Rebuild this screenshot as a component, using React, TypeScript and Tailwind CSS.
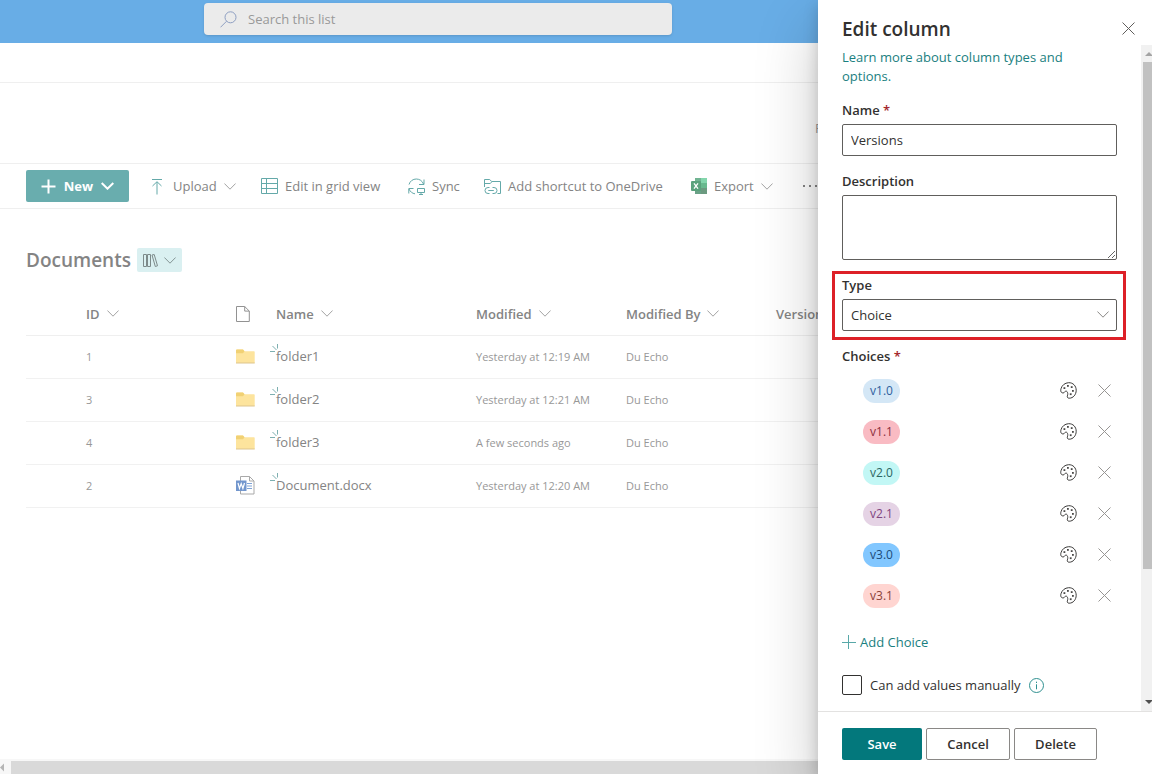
import type { ReactNode } from "react";

const rows = [
  { id: 1, name: "folder1", modified: "Yesterday at 12:19 AM", folder: true },
  { id: 3, name: "folder2", modified: "Yesterday at 12:21 AM", folder: true },
  { id: 4, name: "folder3", modified: "A few seconds ago", folder: true },
  { id: 2, name: "Document.docx", modified: "Yesterday at 12:20 AM", folder: false },
];

const choices = [
  { label: "v1.0", color: "bg-[#d4e7f6] text-[#2f5f9e]" },
  { label: "v1.1", color: "bg-[#f9bbc3] text-[#8c2f3d]" },
  { label: "v2.0", color: "bg-[#c2f7f5] text-[#2b6663]" },
  { label: "v2.1", color: "bg-[#e5d3e5] text-[#7f4580]" },
  { label: "v3.0", color: "bg-[#82c7ff] text-[#1c4a78]" },
  { label: "v3.1", color: "bg-[#ffd5d1] text-[#8b4239]" },
];

const Chevron = ({ className = "" }: { className?: string }) => (
  <svg
    viewBox="0 0 12 7"
    className={`w-3 h-[7px] shrink-0 ${className}`}
    fill="none"
    stroke="currentColor"
    aria-hidden="true"
  >
    <path d="M.4.5 6 6.2 11.6.5" />
  </svg>
);

const Cross = () => (
  <svg viewBox="0 0 13 13" className="w-[13px] h-[13px]" fill="none" stroke="currentColor" aria-hidden="true">
    <path d="M.5.5l12 12M12.5.5l-12 12" />
  </svg>
);

const PaletteIcon = () => (
  <svg viewBox="0 0 17 17" className="w-[17px] h-[17px]" aria-hidden="true">
    <path
      d="M8.600.7C13 .5 16.200 3.900 16.200 8.300c0 4.300-3 7.900-7 7.900-1.700 0-2.200-1.100-1.800-2.300.5-1.600.6-3-.3-4.200-.7-.9-1.800-.8-2.300.1-.7 1.300-2.400 1.600-3.500.4C.6 9.400.6 8.200 1 6.700 2 3.200 4.900.9 8.600.7z"
      fill="none"
      stroke="#3b3a39"
    />
    <g fill="#4a4948">
      <rect x="7" y="3" width="1.800" height="1.800" />
      <rect x="3.500" y="5.200" width="1.800" height="1.800" />
      <rect x="10.800" y="4.200" width="1.800" height="1.800" />
      <rect x="12" y="8" width="1.800" height="1.800" />
      <rect x="9.800" y="11.300" width="1.800" height="1.800" />
    </g>
  </svg>
);

const UploadIcon = () => (
  <svg viewBox="0 0 17 17" className="w-[17px] h-[17px]" fill="none" stroke="#64a9a9" aria-hidden="true">
    <path d="M3 1.500h10M8 16.500V4M3.500 8 8 3.700 12.500 8" />
  </svg>
);

const GridIcon = () => (
  <svg viewBox="0 0 17 17" className="w-[17px] h-[17px]" fill="none" stroke="#64a9a9" aria-hidden="true">
    <path d="M.5.5h16v15H.5zM5.500.5v15M.5 5.500h16M.5 10.500h16" />
  </svg>
);

const SyncIcon = () => (
  <svg viewBox="0 0 17 17" className="w-[17px] h-[17px]" fill="none" stroke="#64a9a9" aria-hidden="true">
    <path d="M1 6.500C2 3 5 1 8.300 1c3.300 0 6 1.900 7.200 5M16 1.500v5h-5M5.500 10.500H.8v5M1 11c1.200 2.700 3.300 4.500 6 4.800M9.500 10.500h7v4h-7zM11 16.500h4M13 14.500v2" />
  </svg>
);

const ShortcutIcon = () => (
  <svg viewBox="0 0 17 17" className="w-[17px] h-[17px]" fill="none" stroke="#64a9a9" aria-hidden="true">
    <path d="M.5 9V1.500h5.200l2 2h8.800v12h-3M.5 5.500h5.800L8 3.500" />
    <path d="M5.500 9.500H4a3 3 0 0 0 0 6h1.500M8.500 9.500H10a3 3 0 0 1 0 6H8.500M4.300 12.500h5.500" />
  </svg>
);

const ExcelIcon = () => (
  <svg viewBox="0 0 16 16" className="w-4 h-4" aria-hidden="true">
    <path d="M4 0h6v8H4z" fill="#71b492" />
    <path d="M10 0h6v5h-6z" fill="#83d6ac" />
    <path d="M10 5h6v5h-6z" fill="#68b98e" />
    <path d="M4 8h6v8H4z" fill="#6aa287" />
    <path d="M10 10h6v6h-6z" fill="#6c9a80" />
    <rect y="3" width="10" height="10" rx="1" fill="#5aa27c" />
    <path d="M3 5.300 7 10.700M7 5.300 3 10.700" stroke="#fff" strokeWidth="1.300" />
  </svg>
);

const FolderIcon = () => (
  <svg viewBox="0 0 19 15" className="w-[19px] h-[15px]" aria-hidden="true">
    <path d="M0 1.500Q0 .5 1 .5h6l1.500 1.700H18q.7 0 .7.800V14H0z" fill="#fde49d" />
    <path d="M0 1.500Q0 .5 1 .5h6l1.500 1.700L7 4.300H0z" fill="#f1d174" />
    <path d="M0 13.500h18.700v1H0z" fill="#dcc58d" />
  </svg>
);

const WordIcon = () => (
  <svg viewBox="0 0 19 19" className="w-[19px] h-[19px]" aria-hidden="true">
    <path d="M4.500.5h9l4.500 4.500v13H4.500zM13.500.5V5H18" fill="#fff" stroke="#a9a9a9" />
    <path d="M11 7.500h5M11 10h5M11 12.500h5" stroke="#7fa3d6" />
    <rect y="4.500" width="10.500" height="10.500" fill="#7296cd" />
    <path d="M2 7l1.500 5.500L5.200 7.500l1.700 5L8.500 7" fill="none" stroke="#fff" strokeWidth="1.200" />
  </svg>
);

const FileIcon = () => (
  <svg viewBox="0 0 14 16" className="w-[14px] h-4" fill="none" stroke="#929292" aria-hidden="true">
    <path d="M.5.5h8.200l4.600 4.600v10.400H.5zM8.700.5v4.600h4.600" />
  </svg>
);

const LibraryIcon = () => (
  <svg viewBox="0 0 15 13" className="w-[15px] h-[13px]" fill="none" stroke="#7d8a8a" aria-hidden="true">
    <path d="M.5.5h3v12h-3zM4.500.5h3v12h-3zM9 1l2.200-.5 3.300 11.300-2.200.7z" />
  </svg>
);

const NewMark = () => (
  <svg
    viewBox="0 0 9 9"
    className="absolute -left-[6px] -top-[3px] w-[9px] h-[9px]"
    fill="none"
    stroke="#7dafb0"
    aria-hidden="true"
  >
    <path d="M7.500 0v4.500M2.500 2l4 4M0 7.500h5" />
  </svg>
);

const ToolButton = ({ icon, label, chevron = false }: { icon: ReactNode; label: string; chevron?: boolean }) => (
  <button type="button" className="flex items-center gap-[7px] whitespace-nowrap">
    {icon}
    <span>{label}</span>
    {chevron && <Chevron className="text-[#a3a3a3]" />}
  </button>
);

const HeaderCell = ({ label }: { label: string }) => (
  <th className="p-0 text-left font-semibold">
    <button type="button" className="flex items-center gap-[7px] whitespace-nowrap">
      {label}
      <Chevron className="text-[#a3a3a3]" />
    </button>
  </th>
);

const Required = () => <span className="text-[#a4262c]"> *</span>;

const DocumentLibrary = () => (
  <main className="flex min-w-0 flex-1 flex-col overflow-hidden">
    <header className="flex h-[43px] shrink-0 bg-[#68ade6] pl-[204px] pt-[3px]">
      <label className="flex h-8 w-[468px] items-center gap-[11px] rounded-sm bg-[#ebebeb] pl-4 shadow-sm">
        <svg viewBox="0 0 17 17" className="w-[17px] h-[17px] shrink-0" fill="none" stroke="#8e9fc2" aria-hidden="true">
          <circle cx="10.500" cy="6.300" r="5.500" />
          <path d="M6.600 10.200.5 16.300" />
        </svg>
        <input
          type="search"
          aria-label="Search this list"
          placeholder="Search this list"
          className="w-full bg-transparent outline-none placeholder:text-[#999]"
        />
      </label>
    </header>
    <div className="h-10 shrink-0 border-b border-[#efefef]" />
    <div className="flex h-[81px] shrink-0 items-center border-b border-[#efefef] pl-[815px] pt-[10px] text-[#999]">
      Follow
    </div>

    <div className="grid h-[45px] shrink-0 grid-cols-[123px_112px_147px_76px_207px_112px_auto] items-center border-b border-[#efefef] pl-[26px] text-[#848484]">
      <button
        type="button"
        className="flex h-8 w-[103px] items-center justify-center gap-2 rounded-xs bg-[#69adae] font-bold text-white"
      >
        <svg viewBox="0 0 15 15" className="w-[15px] h-[15px]" stroke="currentColor" strokeWidth="2" aria-hidden="true">
          <path d="M7.500.5v14M.5 7.500h14" />
        </svg>
        New
        <svg viewBox="0 0 13 8" className="w-[13px] h-2" fill="none" stroke="currentColor" strokeWidth="2" aria-hidden="true">
          <path d="M.7 1l5.800 5.700L12.300 1" />
        </svg>
      </button>
      <ToolButton icon={<UploadIcon />} label="Upload" chevron />
      <ToolButton icon={<GridIcon />} label="Edit in grid view" />
      <ToolButton icon={<SyncIcon />} label="Sync" />
      <ToolButton icon={<ShortcutIcon />} label="Add shortcut to OneDrive" />
      <ToolButton icon={<ExcelIcon />} label="Export" chevron />
      <button type="button" aria-label="More" className="text-[#848484]">
        <svg viewBox="0 0 16 2" className="w-4 h-[2px]" fill="currentColor" aria-hidden="true">
          <path d="M0 0h2v2H0zM6 0h2v2H6zM12 0h2v2h-2z" />
        </svg>
      </button>
    </div>

    <div className="flex flex-1 flex-col overflow-hidden pl-[26px] pt-[39px]">
      <div className="flex h-6 items-center gap-[6px]">
        <h1 className="text-[19px] leading-[26px] font-semibold text-[#848484]">Documents</h1>
        <button
          type="button"
          aria-label="Switch library"
          className="flex h-6 w-[45px] items-center justify-center gap-[6px] rounded-xs bg-[#daf0f1]"
        >
          <LibraryIcon />
          <Chevron className="text-[#849595]" />
        </button>
      </div>

      <table className="mt-[21px] w-[900px] table-fixed border-collapse">
        <colgroup>
          <col className="w-[60px]" />
          <col className="w-[150px]" />
          <col className="w-[40px]" />
          <col className="w-[200px]" />
          <col className="w-[150px]" />
          <col className="w-[150px]" />
          <col className="w-[150px]" />
        </colgroup>
        <thead>
          <tr className="h-[42px] border-b border-[#efefef] text-[#848484]">
            <th className="p-0" />
            <HeaderCell label="ID" />
            <th className="p-0">
              <FileIcon />
            </th>
            <HeaderCell label="Name" />
            <HeaderCell label="Modified" />
            <HeaderCell label="Modified By" />
            <HeaderCell label="Version" />
          </tr>
        </thead>
        <tbody>
          {rows.map((row) => (
            <tr key={row.id} className="h-[43px] border-b border-[#f1f1f1] text-[11px] text-[#989898]">
              <td className="p-0" />
              <td className="p-0">{row.id}</td>
              <td className="p-0">{row.folder ? <FolderIcon /> : <WordIcon />}</td>
              <td className="p-0">
                <a href="#" className="relative text-[13px] leading-5 text-[#848484]">
                  <NewMark />
                  {row.name}
                </a>
              </td>
              <td className="p-0 whitespace-nowrap">{row.modified}</td>
              <td className="p-0">Du Echo</td>
              <td className="p-0" />
            </tr>
          ))}
        </tbody>
      </table>
    </div>

    <div className="flex h-[15px] shrink-0 items-end bg-[#f7f7f7]">
      <svg viewBox="0 0 11 13" className="w-[11px] h-[13px]" aria-hidden="true">
        <path d="M4 2.500v8L0 6.500z" fill="#b5b5b5" />
      </svg>
      <div className="h-[13px] flex-1 bg-[#d9d9d9]" />
    </div>
  </main>
);

const EditColumnPanel = () => (
  <aside className="relative flex w-[334px] shrink-0 flex-col bg-white text-[#323130] shadow-[0_26px_58px_rgba(0,0,0,0.22),0_5px_14px_rgba(0,0,0,0.18)]">
    <div className="flex h-[45px] shrink-0 items-center justify-between pl-6 pr-[17px] pt-3">
      <h2 className="text-[19px] leading-6 font-semibold">Edit column</h2>
      <button type="button" aria-label="Close" className="text-[#605e5c]">
        <Cross />
      </button>
    </div>

    <div className="flex min-h-0 flex-1">
      <form className="min-w-0 flex-1 overflow-hidden px-6 pt-[3px]">
        <a href="#" className="block pr-10 leading-[19px] text-[#1a8080]">
          Learn more about column types and options.
        </a>

        <label htmlFor="name" className="mt-[13px] block h-[25px] leading-[22px] font-semibold">
          Name
          <Required />
        </label>
        <input
          id="name"
          type="text"
          defaultValue="Versions"
          className="block h-8 w-full rounded-xs border border-[#605e5c] px-2 outline-none"
        />

        <label htmlFor="description" className="mt-[14px] block h-[25px] leading-[22px] font-semibold">
          Description
        </label>
        <textarea
          id="description"
          className="block h-[65px] w-full resize-y rounded-xs border border-[#605e5c] px-2 py-1 outline-none"
        />

        <div className="-ml-[10px] -mr-[9px] mt-[11px] border-[3px] border-[#dd2027] pb-[6px] pl-[7px] pr-[6px]">
          <label htmlFor="type" className="block h-[25px] leading-[22px] font-semibold">
            Type
          </label>
          <div className="relative">
            <select
              id="type"
              defaultValue="Choice"
              className="block h-8 w-full appearance-none rounded-xs border border-[#605e5c] bg-white px-2 outline-none"
            >
              <option>Choice</option>
              <option>Number</option>
              <option>Yes/No</option>
            </select>
            <Chevron className="pointer-events-none absolute right-2 top-3 text-[#8a8886]" />
          </div>
        </div>

        <fieldset className="mt-[5px]">
          <legend className="leading-[22px] font-semibold">
            Choices
            <Required />
          </legend>
          <ul className="mt-[3px]">
            {choices.map((choice) => (
              <li key={choice.label} className="flex h-[41px] items-center pl-[21px] pr-[6px]">
                <span
                  className={`flex h-6 w-[37px] items-center justify-center rounded-full text-xs ${choice.color}`}
                >
                  {choice.label}
                </span>
                <button type="button" aria-label={`Style ${choice.label}`} className="ml-auto mr-[21px]">
                  <PaletteIcon />
                </button>
                <button type="button" aria-label={`Remove ${choice.label}`} className="text-[#979593]">
                  <Cross />
                </button>
              </li>
            ))}
          </ul>
        </fieldset>

        <button type="button" className="mt-4 flex h-5 items-center gap-1 text-[#1a8080]">
          <svg viewBox="0 0 14 14" className="w-[14px] h-[14px]" stroke="#58a8a8" aria-hidden="true">
            <path d="M6.500 0v14M0 7.500h14" />
          </svg>
          Add Choice
        </button>

        <div className="mt-[23px] flex h-5 items-center">
          <input
            id="manual"
            type="checkbox"
            className="h-5 w-5 shrink-0 appearance-none rounded-xs border border-[#323130]"
          />
          <label htmlFor="manual" className="pl-2 whitespace-nowrap">
            Can add values manually
          </label>
          <svg viewBox="0 0 15 15" className="ml-2 w-[15px] h-[15px]" fill="none" stroke="#2f9090" aria-hidden="true">
            <circle cx="7.500" cy="7.500" r="7" />
            <path d="M7.500 6.300v5M7.500 3.700v1.300" />
          </svg>
        </div>
      </form>

      <div className="flex w-[11px] shrink-0 flex-col bg-[#f1f1f1] pl-[2px]">
        <svg viewBox="0 0 9 17" className="h-[17px] w-[9px]" aria-hidden="true">
          <path d="M2 11h8L6 7z" fill="#a3a3a3" />
        </svg>
        <div className="grow-[507] bg-[#c1c1c1]" />
        <div className="grow-[125]" />
        <svg viewBox="0 0 9 17" className="h-[17px] w-[9px]" aria-hidden="true">
          <path d="M2 6h8L6 10z" fill="#505050" />
        </svg>
      </div>
    </div>

    <footer className="flex h-[63px] shrink-0 items-start gap-1 border-t border-[#e3e2e1] px-6 pt-4 font-semibold">
      <button type="button" className="h-8 w-20 rounded-xs bg-[#03787c] text-white">
        Save
      </button>
      <button type="button" className="h-8 w-[84px] rounded-xs border border-[#8a8886]">
        Cancel
      </button>
      <button type="button" className="h-8 w-[83px] rounded-xs border border-[#8a8886]">
        Delete
      </button>
    </footer>
  </aside>
);

export default function App() {
  return (
    <div className="flex h-screen overflow-hidden bg-white font-['Open_Sans',sans-serif] text-[13px] leading-[26px]">
      <DocumentLibrary />
      <EditColumnPanel />
    </div>
  );
}
